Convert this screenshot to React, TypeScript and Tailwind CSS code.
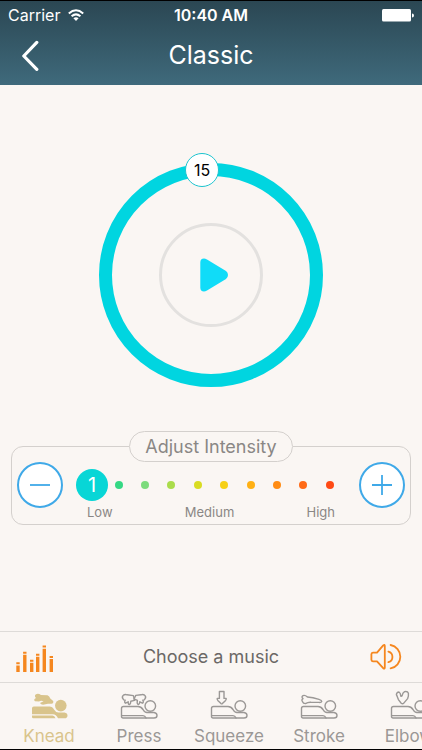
import { useState } from "react";
import type { ReactNode } from "react";

const levels = [
  "bg-[#22d07c]",
  "bg-[#35d884]",
  "bg-[#7cdb7c]",
  "bg-[#aadc4b]",
  "bg-[#d9dc22]",
  "bg-[#f6d016]",
  "bg-[#ffb014]",
  "bg-[#ff8c14]",
  "bg-[#ff6a16]",
  "bg-[#ff4a14]",
];

const BODY =
  "M1.5 26.5V18.5Q1.5 16.5 3.5 16.5H18Q21 16.5 23 19.5Q24.5 22.5 27 22.5H34Q37 23 37 25.5Q37 28 34 28H3Q1.5 28 1.5 26.5Z";

const Figure = ({ children }: { children: ReactNode }) => (
  <svg
    width="38"
    height="30"
    viewBox="0 0 38 30"
    fill="none"
    stroke="currentColor"
    strokeWidth="1.4"
    strokeLinejoin="round"
    strokeLinecap="round"
    aria-hidden="true"
  >
    <path d={BODY} />
    <path d="M2 25.6H23Q25 25.6 26 28" />
    <circle cx="30.3" cy="16" r="5.3" />
    {children}
  </svg>
);

const KneadIcon = () => (
  <svg width="38" height="30" viewBox="0 0 38 30" fill="currentColor" aria-hidden="true">
    <path d="M2 24.2V18.2Q2 16.5 3.8 16.5H19.5Q22.5 16.5 24 19.5Q25.5 22.4 28.5 22.4H34.5Q37.5 23 37.5 25.4Q37.5 28.2 34.5 28.2H28Q26 24.4 23 24.2Z" />
    <path d="M2 25.6H22.5Q24.5 26 25.5 28.2H3.3Q2 28.2 2 27Z" />
    <circle cx="30.8" cy="15.6" r="5.8" />
    <path d="M6 4.2Q8.5 3.2 11 5L17.5 5.2Q19.5 6.2 20.3 8.4L23.2 11Q23.8 13.4 21.4 13.8H18L13 14.8Q10.8 14.6 10 13L13.6 11.2Q11 10.4 9 11.4L5 11.2Q3 9.6 6 8Q3.8 5.8 6 4.2Z" />
  </svg>
);

const PressIcon = () => (
  <Figure>
    <path d="M3.2 9.2Q1.4 6.6 3.4 5.2Q5 4.2 7 4.8L13.4 5.6L14.6 10.4L10.8 11.2Q10.8 14 9.4 14.6Q8 14.4 8.2 11.8L5.6 13.2Q4 12.4 5.2 10.2Q3.8 10.4 3.2 9.2Z" />
    <path d="M24.8 9.2Q26.6 6.6 24.6 5.2Q23 4.2 21 4.8L15.8 5.4L14 9L17.4 10.4Q16.6 13.8 18.4 14.6Q19.8 14.2 19.8 11.8L22.4 13.2Q24 12.4 22.8 10.2Q24.2 10.4 24.8 9.2Z" />
  </Figure>
);

const SqueezeIcon = () => (
  <Figure>
    <path d="M9.4 1.5H14V8.4H16.2Q16.4 9.4 15.6 10.4L12.4 13.6Q11.7 14.1 11 13.6L7.8 10.4Q7 9.4 7.2 8.4H9.4Z" />
  </Figure>
);

const StrokeIcon = () => (
  <Figure>
    <path d="M3 8.6Q1 7 3 5.6Q5 4.8 7.4 7L13 7.8L19 9.4Q21.8 10.2 21.8 11.4Q21.4 12.6 19 12.4L11 12.2Q8 12 5.4 13.6Q3.2 13.6 2.4 11.4Q1.2 9.8 3 8.6Z" />
  </Figure>
);

const ElbowIcon = () => (
  <Figure>
    <path d="M6.4 4.6Q6.6 2.2 9 2Q10.6 3 10.8 6.2Q11.6 6.6 12.2 5.4Q12.6 2.8 14.6 1.6Q17.6 1 18.4 3.2Q18.8 6 17.6 8.6L13.6 13.4Q12.4 14.2 11.2 13.2L8.4 9.6L7.2 6.4Z" />
  </Figure>
);

const modes = [
  { name: "Knead", icon: <KneadIcon /> },
  { name: "Press", icon: <PressIcon /> },
  { name: "Squeeze", icon: <SqueezeIcon /> },
  { name: "Stroke", icon: <StrokeIcon /> },
  { name: "Elbow", icon: <ElbowIcon /> },
];

const Header = () => (
  <header className="h-[84px] bg-linear-to-b from-[#2b4753] to-[#3f6a7c] text-white">
    <div className="grid h-7 grid-cols-3 items-center px-2">
      <div className="flex items-center gap-2 text-base leading-5">
        Carrier
        <svg width="16" height="12" viewBox="0 0 16 12" fill="none" stroke="white" strokeWidth="2" aria-hidden="true">
          <path d="M0.8 4.4Q8-2 15.2 4.4" />
          <path d="M3.6 7.3Q8 3.4 12.4 7.3" />
          <path d="M8 12L5.4 9.2Q8 7.2 10.6 9.2Z" fill="white" stroke="none" />
        </svg>
      </div>
      <span className="text-center text-base leading-5 font-semibold">10:40 AM</span>
      <svg className="justify-self-end" width="32" height="13" viewBox="0 0 32 13" fill="white" aria-hidden="true">
        <rect x="0" y="0" width="29" height="12.5" rx="1.5" />
        <path d="M30 4.5Q32 4.5 32 6.5T30 8.5Z" />
      </svg>
    </div>
    <div className="grid h-[52px] grid-cols-[1fr_auto_1fr] items-center px-5">
      <button type="button" aria-label="Back" className="justify-self-start">
        <svg width="20" height="32" viewBox="0 0 20 32" fill="none" stroke="white" strokeWidth="3.2" aria-hidden="true">
          <path d="M16.8 3.4L3.8 17L16.8 30.4" strokeLinecap="round" strokeLinejoin="round" />
        </svg>
      </button>
      <h1 className="text-[25px] leading-8">Classic</h1>
    </div>
  </header>
);

const Timer = () => {
  const [playing, setPlaying] = useState(false);

  return (
    <div className="relative mx-auto flex size-56 items-center justify-center rounded-full border-[13px] border-[#00d5e0]">
      <button
        type="button"
        aria-label={playing ? "Pause" : "Play"}
        onClick={() => setPlaying(!playing)}
        className="flex size-[104px] items-center justify-center rounded-full border-3 border-[#e3e1df]"
      >
        <svg width="34" height="34" viewBox="0 0 34 34" fill="#10dcf8" aria-hidden="true">
          {playing ? (
            <path d="M7 2h7v30H7zM20 2h7v30h-7z" />
          ) : (
            <path d="M6.3 4.5Q6.3 0.6 10 0.5Q11.4 0.5 13 1.6L32 13Q34 14.6 34 17T32 21L13 32.4Q11.4 33.5 10 33.5Q6.3 33.4 6.3 29.5Z" />
          )}
        </svg>
      </button>
      {/* minutes left, rides on the ring */}
      <span className="absolute -top-[23px] left-[73px] flex size-[34px] items-center justify-center rounded-full border border-[#1cc4cf] bg-white text-base text-black">
        15
      </span>
    </div>
  );
};

const stepButton =
  "flex size-[46px] shrink-0 items-center justify-center rounded-full border-2 border-[#3fa9e8] bg-white text-[#3fa9e8]";

const Intensity = () => {
  const [level, setLevel] = useState(1);

  return (
    <fieldset className="mx-[11px] mt-11 rounded-xl border border-[#d4d0cd] px-[5px] pb-1">
      <legend className="mx-auto h-[31px] rounded-2xl border border-[#d4d0cd] px-[15px] text-lg leading-[29px] text-[#8a8785]">
        Adjust Intensity
      </legend>
      <div className="flex items-start gap-4">
        <button
          type="button"
          aria-label="Decrease intensity"
          className={stepButton}
          onClick={() => setLevel(Math.max(1, level - 1))}
        >
          <svg width="20" height="20" viewBox="0 0 20 20" stroke="currentColor" strokeWidth="1.8" aria-hidden="true">
            <path d="M0 10H20" />
          </svg>
        </button>
        <div className="min-w-0 flex-1 pt-[7px]">
          <div className="grid h-8 grid-cols-10 items-center">
            {levels.map((color, i) => (
              <label key={color} className="flex items-center justify-center">
                <input
                  type="radio"
                  name="intensity"
                  aria-label={`Level ${i + 1}`}
                  checked={level === i + 1}
                  onChange={() => setLevel(i + 1)}
                  className={`size-2 shrink-0 appearance-none rounded-full ${color} checked:-mx-3 checked:size-8 checked:bg-[#08d6d6]`}
                />
                {level === i + 1 && (
                  <span className="absolute text-xl leading-6 text-white">{level}</span>
                )}
              </label>
            ))}
          </div>
          <div className="mt-[3px] flex justify-between px-2 text-[13px] leading-4 text-[#8a8785]">
            <span>Low</span>
            <span>Medium</span>
            <span>High</span>
          </div>
        </div>
        <button
          type="button"
          aria-label="Increase intensity"
          className={stepButton}
          onClick={() => setLevel(Math.min(levels.length, level + 1))}
        >
          <svg width="20" height="20" viewBox="0 0 20 20" stroke="currentColor" strokeWidth="1.8" aria-hidden="true">
            <path d="M0 10H20M10 0V20" />
          </svg>
        </button>
      </div>
    </fieldset>
  );
};

const MusicBar = () => (
  <div className="grid h-[51px] grid-cols-[1fr_auto_1fr] items-center border-t border-[#dedbd8] px-4">
    <svg width="38" height="30" viewBox="0 0 38 30" fill="#f5871f" aria-hidden="true">
      <path d="M0.3 20.3h3.4v2H0.3zM0.3 23.4h3.4V31H0.3z" />
      <path d="M7.1 9.7h3.4v2H7.1zM7.1 12.8h3.4V30H7.1z" />
      <path d="M14 17.7h3.4v2H14zM14 20.8h3.4V30H14z" />
      <path d="M20 11.7h3.4v2H20zM20 14.8h3.4V30H20z" />
      <path d="M26.6 3.6H30v2H26.6zM26.6 6.7H30V30H26.6z" />
      <path d="M33.6 14H37v2H33.6zM33.6 17.1H37V30H33.6z" />
    </svg>
    <button type="button" className="text-lg leading-6 text-[#6b6866]">
      Choose a music
    </button>
    <button type="button" aria-label="Volume" className="justify-self-end">
      <svg
        width="36"
        height="28"
        viewBox="0 0 36 28"
        fill="none"
        stroke="#f5871f"
        strokeWidth="1.8"
        strokeLinecap="round"
        strokeLinejoin="round"
        aria-hidden="true"
      >
        <path d="M3 9.6H7L13.2 2.4Q14.8 1.2 14.8 3V24.6Q14.8 26.4 13.2 25.2L7 18.4H3Q1.4 18.2 1.4 16.8V11.2Q1.4 9.8 3 9.6Z" />
        <path d="M18.4 8.6A5.5 5.5 0 0 1 18.4 19.2" />
        <path d="M20.6 2A11.9 11.9 0 0 1 20.6 25.4" />
      </svg>
    </button>
  </div>
);

const ModeTabs = () => {
  const [active, setActive] = useState("Knead");

  return (
    <nav className="flex h-[67px] overflow-x-auto overflow-y-hidden border-t border-[#dedbd8] pl-1 [scrollbar-width:none]">
      {modes.map((mode) => (
        <button
          key={mode.name}
          type="button"
          onClick={() => setActive(mode.name)}
          className={`flex w-[90px] shrink-0 flex-col items-center gap-1 pt-[7px] text-[17px] leading-6 ${
            active === mode.name ? "text-[#d9c48c]" : "text-[#9b9896]"
          }`}
        >
          {mode.icon}
          {mode.name}
        </button>
      ))}
    </nav>
  );
};

const App = () => (
  <div className="flex min-h-screen flex-col border-y border-black bg-[#faf6f3] font-[Inter,'Liberation_Sans',sans-serif]">
    <Header />
    <main className="flex-1 pt-[78px]">
      <Timer />
      <Intensity />
    </main>
    <MusicBar />
    <ModeTabs />
  </div>
);

export default App;
